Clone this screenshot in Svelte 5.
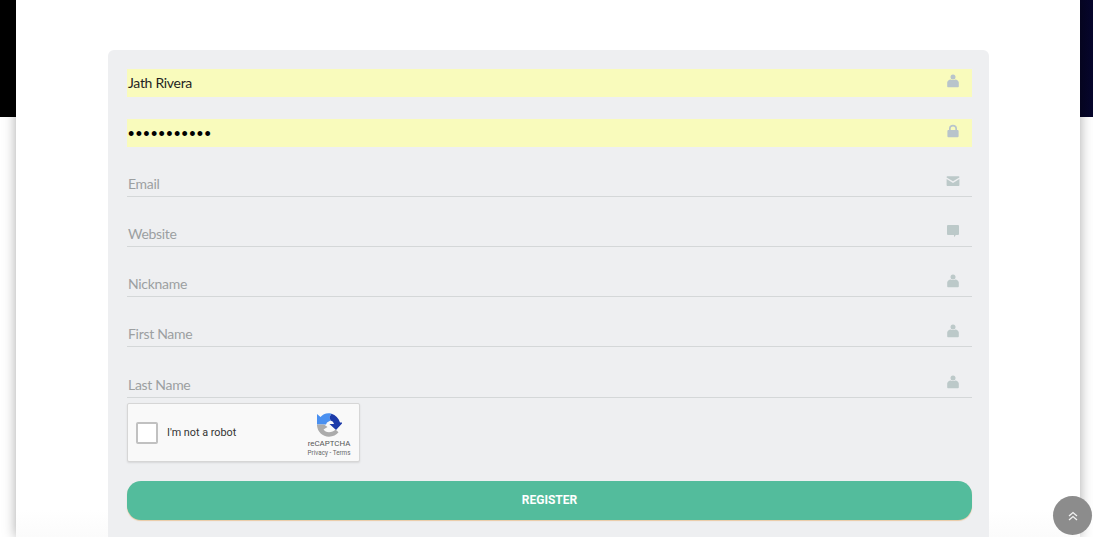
<script>
  const person = 'person';
  const fields = [
    { label: 'Username', value: 'Jath Rivera', icon: person, filled: true, type: 'text' },
    { label: 'Password', value: '•••••••••••', icon: 'lock', filled: true, type: 'password' },
    { label: 'Email', icon: 'mail' },
    { label: 'Website', icon: 'comment' },
    { label: 'Nickname', icon: person },
    { label: 'First Name', icon: person },
    { label: 'Last Name', icon: person }
  ];
</script>

<div class="page">
  <main class="sheet">
    <form class="panel" onsubmit={(e) => e.preventDefault()}>
      {#each fields as f}
        <div class="field" class:filled={f.filled}>
          {#if f.filled}
            <span class="value" class:dots={f.type === 'password'}>{f.value}</span>
          {:else}
            <span class="placeholder">{f.label}</span>
          {/if}
          <svg class="icon" viewBox="0 0 14 14" aria-hidden="true">
            {#if f.icon === 'person'}
              <circle cx="7" cy="2.9" r="2.5" />
              <path d="M1.2 12.500V8.600C1.200 6.600 3 5.600 4.600 5.400 6 6.300 8 6.300 9.400 5.400 11 5.600 12.800 6.600 12.800 8.600V12.500C12.800 13 12.400 13.200 12 13.200H2C1.600 13.200 1.200 13 1.200 12.500Z" />
            {:else if f.icon === 'lock'}
              <path fill-rule="evenodd" d="M3 6V4.400C3 2.200 4.700.8 7 .8s4 1.400 4 3.600V6h.7c.5 0 .9.400.9.900v5.400c0 .5-.4.9-.9.9H2.300c-.5 0-.9-.4-.9-.9V6.900c0-.5.4-.9.900-.9H3ZM4.700 6h4.600V4.400C9.300 3.200 8.300 2.400 7 2.400s-2.300.8-2.300 2V6Z" />
            {:else if f.icon === 'mail'}
              <path d="M.6 3.200c0-.6.4-1 1-1h10.800c.6 0 1 .4 1 1v.2L7 7.300.6 3.400Z" />
              <path d="M.6 5 7 8.900 13.400 5v6c0 .6-.4 1-1 1H1.600c-.6 0-1-.4-1-1Z" />
            {:else}
              <path d="M1 2c0-.5.4-.9.900-.9h10.200c.5 0 .9.400.9.900v8c0 .5-.4.9-.9.900H9.800L8 13.200V10.900H1.900c-.5 0-.9-.4-.9-.9Z" />
            {/if}
          </svg>
        </div>
      {/each}

      <div class="captcha">
        <span class="check"></span>
        <span class="robot">I'm not a robot</span>
        <div class="brand">
          <svg class="logo" viewBox="0 0 26 24" aria-hidden="true">
            <path fill="#4a90f0" d="M1 1 4.500 4C6.500 1.800 9 .3 12.500 .3 13.500 .3 14.500 .4 15.500 .7L13.500 4 14.500 7.500 11 9.500 10 11.500H1Z" />
            <path fill="#1c3aa9" d="M15.500.7C19.500 2 22.800 5 24 9.500H26V10.500L20 17 13.500 11H18C17.500 9 16 7.800 14.500 7.500L13.500 4Z" />
            <path fill="#ababab" d="M1 12.500C1.500 18.800 6.500 23.700 13 23.700 17 23.700 20.500 22 22.500 19.300L19.500 16.500C17.800 18.300 15.500 19.300 13 19.300 10.500 19.300 8.500 18 7.500 16.500L11.500 14 8 11.500H1Z" />
          </svg>
          <span class="rc">reCAPTCHA</span>
          <span class="terms">Privacy - Terms</span>
        </div>
      </div>

      <button class="register" type="submit">REGISTER</button>
    </form>
  </main>

  <button class="top" type="button" aria-label="Back to top">
    <svg viewBox="0 0 12 12" aria-hidden="true">
      <path d="M2 6 6 2.500 10 6M2 10 6 6.500 10 10" />
    </svg>
  </button>
</div>

<style>
  :global(body) {
    margin: 0;
    background: #fff;
  }

  .page {
    position: relative;
    height: 537px;
    overflow: hidden;
    display: flex;
    justify-content: flex-start;
    background:
      linear-gradient(90deg, #000 0, #000 92%, #07062c 100%) top / 100% 117px no-repeat,
      linear-gradient(#fbfbfb, #fff 60px);
  }

  .sheet {
    width: 1064px;
    height: 537px;
    margin-left: 16px;
    flex: none;
    box-sizing: border-box;
    padding: 50px 91px 0 92px;
    background: linear-gradient(#fff 510px, #fbfbfb);
    box-shadow: 0 0 12px rgba(0, 0, 0, 0.34);
  }

  .panel {
    height: 520px;
    box-sizing: border-box;
    padding: 19px 17px 0 19px;
    background: #eeeff1;
    border-radius: 6px;
    font-family: Lato, "Liberation Sans", sans-serif;
  }

  .field {
    height: 27.500px;
    margin-bottom: 22.800px;
    box-sizing: border-box;
    display: flex;
    align-items: center;
    justify-content: space-between;
    padding: 0 12px 1px 1px;
    border-bottom: 1px solid #d4d7d8;
    font-size: 14px;
    letter-spacing: -0.3px;
  }

  .field.filled {
    height: 28px;
    margin-bottom: 22px;
    background: #f9fbbc;
    border-bottom: 0;
    padding-top: 0;
  }

  .field:nth-child(n + 3) {
    align-items: flex-end;
    padding-bottom: 4px;
  }

  .value {
    color: #1f1f1f;
  }

  .value.dots {
    color: #000;
    font-family: "Liberation Sans", sans-serif;
    font-size: 18px;
    letter-spacing: 1.350px;
    line-height: 20px;
    padding-top: 2px;
  }

  .placeholder {
    color: #9c9fa1;
  }

  .icon {
    width: 14px;
    height: 14px;
    margin-bottom: 3px;
    fill: #bcc9c9;
  }

  .field:nth-child(n + 3) .icon {
    margin-bottom: 4px;
  }

  .field.filled .icon {
    fill: #b8c4cb;
  }

  .captcha {
    width: 233px;
    height: 58.500px;
    margin-top: -17px;
    box-sizing: border-box;
    display: flex;
    align-items: center;
    padding-left: 8px;
    background: #f9f9f9;
    border: 1px solid #d6d6d6;
    border-radius: 2px;
    box-shadow: 0 1px 2px rgba(0, 0, 0, 0.1);
    font-family: Roboto, "Liberation Sans", sans-serif;
    position: relative;
  }

  .check {
    width: 22px;
    height: 22px;
    box-sizing: border-box;
    background: #fff;
    border: 2px solid #c1c1c1;
    border-radius: 2px;
    flex: none;
  }

  .robot {
    margin-left: 9px;
    font-size: 10.800px;
    color: #333;
  }

  .brand {
    margin-left: auto;
    width: 60px;
    padding-top: 6px;
    display: flex;
    flex-direction: column;
    align-items: center;
    color: #555;
  }

  .logo {
    width: 26px;
    height: 24px;
  }

  .rc {
    font-size: 7.900px;
    line-height: 10px;
    margin-top: 2px;
  }

  .terms {
    font-size: 6.300px;
    line-height: 9px;
    color: #666;
  }

  .register {
    display: block;
    width: 100%;
    height: 39px;
    margin-top: 19px;
    border: 0;
    border-radius: 14px;
    background: #53bc9c;
    box-shadow: 0 1px 1px #e9c9a4;
    color: #fff;
    font-family: Roboto, "Liberation Sans", sans-serif;
    font-size: 12px;
    font-weight: 700;
  }

  .top {
    position: absolute;
    left: 1053px;
    top: 496px;
    width: 39px;
    height: 39px;
    padding: 0;
    border: 0;
    border-radius: 50%;
    background: #8c8c8c;
    display: flex;
    align-items: center;
    justify-content: center;
  }

  .top svg {
    width: 12px;
    height: 12px;
    fill: none;
    stroke: #f2f2f2;
    stroke-width: 1.300;
  }
</style>
